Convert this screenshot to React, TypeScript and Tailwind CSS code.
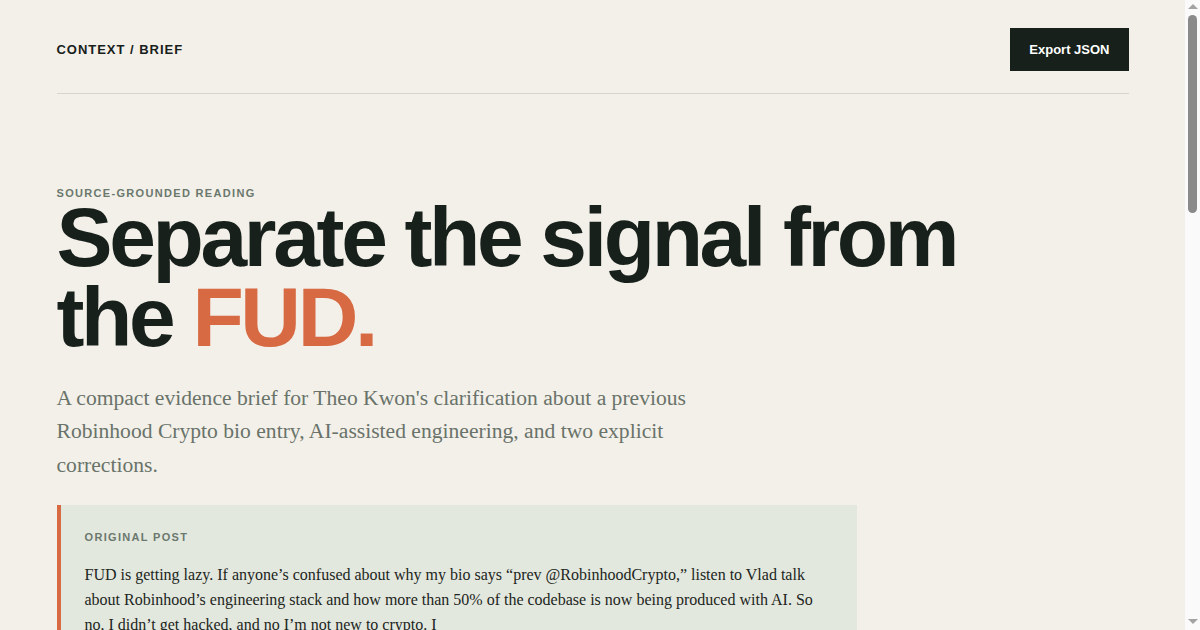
// Context brief – evidence page

const sans = "font-['Liberation_Sans',Arial,sans-serif]";
const serif = "font-['Liberation_Serif','Times_New_Roman',serif]";

const claims = [
  {
    tag: 'CLAIM 01',
    title: 'The bio entry refers to a past role',
    body: 'The "prev @RobinhoodCrypto" line describes earlier work. The post frames it as a previous affiliation, not a current one.',
  },
  {
    tag: 'CLAIM 02',
    title: 'AI-assisted engineering is cited, not asserted',
    body: 'The post points readers to a public talk about Robinhood’s engineering stack and the share of code produced with AI.',
  },
  {
    tag: 'CORRECTION',
    title: 'No account compromise',
    body: 'The author states directly that the account was not hacked.',
  },
  {
    tag: 'CORRECTION',
    title: 'Not new to crypto',
    body: 'The author states directly that they are not new to crypto.',
  },
];

// browser scrollbar as it shows in the capture
function ScrollBar() {
  return (
    <div className="fixed right-0 top-0 h-screen w-[15px] bg-[#fafafa] flex flex-col items-center">
      <div className="mt-[4px] w-0 h-0 border-l-[5px] border-r-[5px] border-b-[5px] border-l-transparent border-r-transparent border-b-[#a3a3a3]" />
      <div className="mt-[6px] w-[9px] h-[198px] rounded-full bg-[#8a8a8a]" />
      <div className="mt-auto mb-[6px] w-0 h-0 border-l-[5px] border-r-[5px] border-t-[5px] border-l-transparent border-r-transparent border-t-[#a3a3a3]" />
    </div>
  );
}

export default function App() {
  return (
    <div className={`min-h-screen bg-[#f3f0e9] text-[#17201b] pr-[15px] ${sans}`}>
      <ScrollBar />
      <div className="max-w-[1072px] mx-auto">
        {/* header */}
        <header className="flex items-center justify-between pt-7 pb-[22px] border-b border-[#d7d6ce]">
          <div className="text-[13px] font-bold tracking-[0.075em]">CONTEXT / BRIEF</div>
          <button className="h-[43px] px-[19px] bg-[#17201b] text-white text-[13px] font-bold">
            Export JSON
          </button>
        </header>

        {/* hero */}
        <section className="pt-[91px]">
          <div className="text-[11px] font-bold tracking-[0.12em] text-[#6b786e]">
            SOURCE-GROUNDED READING
          </div>
          <h1 className="-mt-[5px] max-w-[960px] text-[84px] font-bold leading-[80px] tracking-[-0.04em]">
            Separate the signal from the <span className="text-[#d76a43]">FUD.</span>
          </h1>
          <p className={`mt-[25px] max-w-[680px] text-[21.6px] leading-[33.5px] text-[#69736a] ${serif}`}>
            A compact evidence brief for Theo Kwon's clarification about a previous Robinhood Crypto bio entry,
            AI-assisted engineering, and two explicit corrections.
          </p>
        </section>

        {/* original post */}
        <section className="mt-[23px] max-w-[800px] bg-[#e3e8df] border-l-4 border-[#d76a43] pl-6 pr-7 pt-[24px] pb-7">
          <div className="text-[11px] font-bold tracking-[0.12em] text-[#6b786e]">ORIGINAL POST</div>
          <p className={`mt-[16px] text-[16px] leading-[25px] text-[#1c2520] ${serif}`}>
            FUD is getting lazy. If anyone’s confused about why my bio says “prev @RobinhoodCrypto,” listen to Vlad
            talk about Robinhood’s engineering stack and how more than 50% of the codebase is now being produced with
            AI. So no, I didn’t get hacked, and no I’m not new to crypto. I
            <br />
            just build with better tools than most people realize.
          </p>
        </section>

        {/* claims */}
        <section className="mt-24">
          <div className="text-[11px] font-bold tracking-[0.12em] text-[#6b786e]">WHAT THE POST SAYS</div>
          <h2 className="mt-2 text-[40px] font-bold leading-tight tracking-[-0.03em]">Four readable claims</h2>
          <div className="mt-8 grid grid-cols-2 gap-6">
            {claims.map((c) => (
              <div key={c.title} className="border border-[#d7d6ce] bg-[#f7f5ef] p-7">
                <div
                  className={`text-[11px] font-bold tracking-[0.12em] ${
                    c.tag === 'CORRECTION' ? 'text-[#d76a43]' : 'text-[#6b786e]'
                  }`}
                >
                  {c.tag}
                </div>
                <h3 className="mt-3 text-[22px] font-bold tracking-[-0.02em]">{c.title}</h3>
                <p className={`mt-3 text-[17px] leading-[26px] text-[#4d574f] ${serif}`}>{c.body}</p>
              </div>
            ))}
          </div>
        </section>

        {/* sources */}
        <section className="mt-24 pb-32">
          <div className="text-[11px] font-bold tracking-[0.12em] text-[#6b786e]">SOURCES</div>
          <h2 className="mt-2 text-[40px] font-bold leading-tight tracking-[-0.03em]">Where to check</h2>
          <ul className={`mt-6 space-y-4 text-[18px] text-[#39433b] ${serif}`}>
            <li className="border-b border-[#d7d6ce] pb-4">The original post on X, quoted above in full.</li>
            <li className="border-b border-[#d7d6ce] pb-4">Public talk on Robinhood’s engineering stack.</li>
            <li className="border-b border-[#d7d6ce] pb-4">Author profile and bio history.</li>
          </ul>
        </section>
      </div>
    </div>
  );
}
